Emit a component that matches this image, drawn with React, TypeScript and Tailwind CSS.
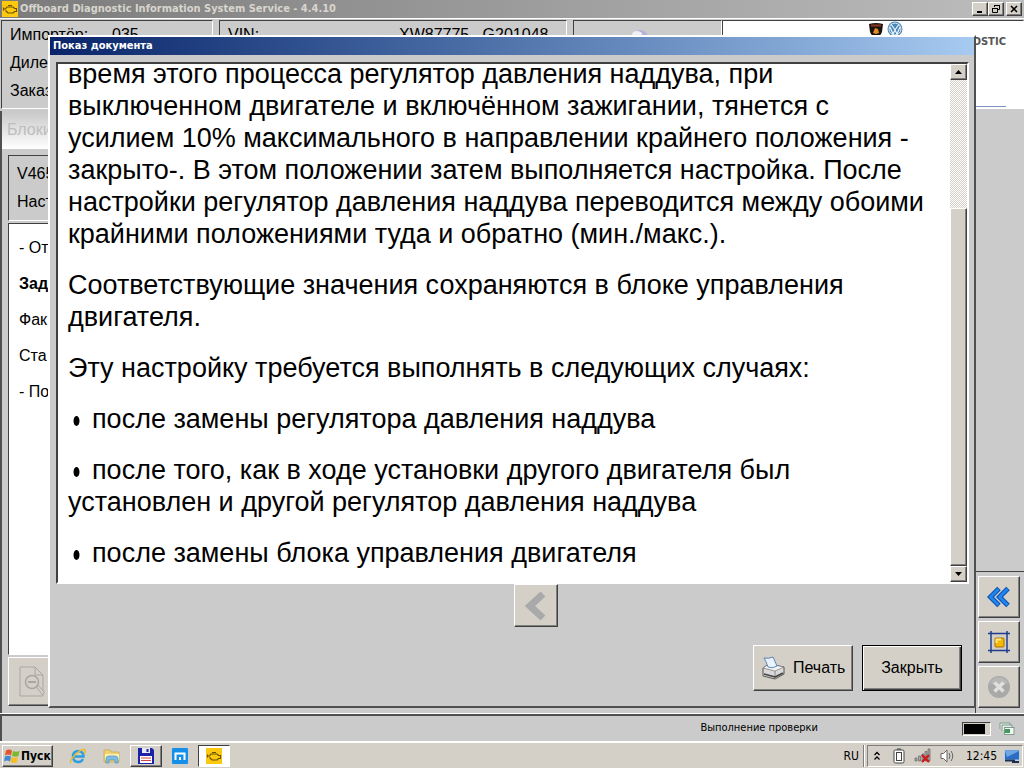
import type { ReactNode } from "react";
import { clsx } from "clsx";

const raised =
  "border border-t-white border-l-white border-r-[#404040] border-b-[#404040] shadow-[inset_-1px_-1px_0_#808080]";
const sunken =
  "border border-t-[#404040] border-l-[#404040] border-r-white border-b-white";
const uiFont = "font-['DejaVu_Sans_Condensed','DejaVu_Sans',sans-serif]";

function EngineIcon({ className }: { className?: string }) {
  return (
    <svg viewBox="0 0 16 16" className={className} aria-hidden="true">
      <rect width="16" height="16" fill="#fcc810" />
      <path
        d="M1.500 6.500v3M2 8h1.500L5 6h6l1.500 1.500h2v3h-2L11 12H6L3.500 9.500M6 4.500h4"
        fill="none"
        stroke="#6b5200"
        strokeWidth="1.200"
      />
    </svg>
  );
}

function ChromeButton({ label, children }: { label: string; children: ReactNode }) {
  return (
    <button
      aria-label={label}
      className={clsx("flex h-[14px] w-4 items-center justify-center bg-[#d4d0c8]", raised)}
    >
      <svg viewBox="0 0 12 10" className="h-[10px] w-3" fill="none" stroke="#000">
        {children}
      </svg>
    </button>
  );
}

function TitleBar() {
  return (
    <header className="flex h-[18px] shrink-0 items-center bg-linear-to-r from-[#7b7b7b] to-[#bdbdbd] pr-[2px] pl-[2px]">
      <EngineIcon className="size-4" />
      <h1 className={clsx("ml-[2px] flex-1 text-[11px] leading-4 font-bold text-[#d8d5ce]", uiFont)}>
        Offboard Diagnostic Information System Service - 4.4.10
      </h1>
      <div className="flex">
        <ChromeButton label="Свернуть">
          <path d="M3 8h5" strokeWidth="2" />
        </ChromeButton>
        <ChromeButton label="Восстановить">
          <path d="M4.500 3V1.500h5v4H8M4 1.500h6M2.500 4.500h5v4h-5zM2 4.500h6" />
        </ChromeButton>
        <span className="w-[2px]" />
        <ChromeButton label="Закрыть окно">
          <path d="M3 2l6 6M9 2l-6 6" strokeWidth="1.600" />
        </ChromeButton>
      </div>
    </header>
  );
}

function BrandPanel() {
  return (
    <div className={clsx("flex w-[302px] flex-col bg-white pr-[17px] pb-px", sunken)}>
      <div className="ml-[145px] flex h-[14px] gap-[3px]">
        <svg viewBox="0 0 16 16" className="mt-[2px] size-4" aria-hidden="true">
          <path d="M1 1q7-2 14 0l-1 8q-2 5-6 6-4-1-6-6z" fill="#1c1210" />
          <path d="M3 2.500h10" stroke="#8a3a22" strokeWidth="2" />
          <path d="M5 10l2-5 3 1 1 4-3 1z" fill="#e08a28" />
        </svg>
        <svg viewBox="0 0 16 16" className="size-4" aria-hidden="true">
          <circle cx="8" cy="8" r="7.500" fill="#4b86b8" />
          <circle cx="8" cy="8" r="6" fill="none" stroke="#dcebf5" />
          <path d="M4 3l4 6 4-6M3 6l3 7 2-4 2 4 3-7" fill="none" stroke="#eef6fb" strokeWidth="1.200" />
        </svg>
      </div>
      <p className="self-end text-[10px] leading-[14px] font-bold text-[#555] font-['DejaVu_Sans',sans-serif]">
        DIAGNOSTIC
      </p>
      <div className="mt-auto h-px bg-[#7b93bd]" />
    </div>
  );
}

function InfoHeader() {
  return (
    <section className="flex h-[91px] shrink-0 border-t border-white pt-px pl-px text-base leading-7">
      <div className={clsx("w-[212px] pl-2", sunken)}>
        <dl className="grid grid-cols-[102px_1fr]">
          <dt>Импортёр:</dt>
          <dd>035</dd>
          <dt>Дилер</dt>
          <dd />
          <dt>Заказ</dt>
          <dd />
        </dl>
      </div>
      <div className={clsx("ml-[6px] flex-1 pl-2", sunken)}>
        <dl className="grid grid-cols-[171px_1fr]">
          <dt>VIN:</dt>
          <dd>XW87775_ G201048</dd>
        </dl>
      </div>
      <div className={clsx("ml-[6px] flex w-[149px] items-start justify-center pt-2", sunken)}>
        <svg viewBox="0 0 18 18" className="mr-4 size-[18px]" aria-hidden="true">
          <ellipse cx="9" cy="9" rx="8" ry="8" fill="#b7b0d8" />
          <ellipse cx="6" cy="5" rx="5" ry="3" fill="#f1eff5" />
        </svg>
      </div>
      <BrandPanel />
    </section>
  );
}

const steps = [
  { text: "- От", bold: false },
  { text: "Зад", bold: true },
  { text: "Фак", bold: false },
  { text: "Ста", bold: false },
  { text: "- По", bold: false },
];

function TestPlan() {
  return (
    <main className="flex flex-1 flex-col border-l-2 border-[#505050] pb-[7px]">
      <h2 className="h-[38px] shrink-0 bg-linear-to-b from-[#c8c8c8] to-white pl-[5px] text-base leading-[38px] text-[#bdbdbd]">
        Блоки
      </h2>
      <div className="mt-[6px] ml-[6px] flex flex-1 flex-col">
        <div className={clsx("h-[66px] shrink-0 pt-1 pl-2 text-base leading-7", sunken)}>
          <p>V465</p>
          <p>Наст</p>
        </div>
        <ul className={clsx("mt-[2px] flex-1 bg-white pt-[6px] pl-[10px]", sunken)}>
          {steps.map((step) => (
            <li
              key={step.text}
              className={clsx("text-base leading-9", step.bold && "font-bold")}
            >
              {step.text}
            </li>
          ))}
        </ul>
        <button
          aria-label="Просмотр документа"
          className={clsx("mt-[2px] h-[49px] w-[54px] shrink-0 bg-[#d4d0c8] pl-[10px]", raised)}
        >
          <svg viewBox="0 0 28 32" className="h-8 w-7" fill="none" stroke="#a9a7a2" aria-hidden="true">
            <path d="M1 1h15l8 8v21H1zM16 1v8h8" />
            <circle cx="13" cy="16" r="6.500" fill="#d4d0c8" strokeWidth="1.500" />
            <path d="M9 16h8" strokeWidth="2" />
            <path d="M17.500 21l2-1.500 6 7-2 2.500z" fill="#d4d0c8" />
          </svg>
        </button>
      </div>
    </main>
  );
}

function ToolButton({ label, children }: { label: string; children: ReactNode }) {
  return (
    <button
      aria-label={label}
      className={clsx("flex h-[42px] w-[42px] items-center justify-center bg-[#d4d0c8]", raised)}
    >
      {children}
    </button>
  );
}

function SideTools() {
  return (
    <aside className="flex w-[49px] shrink-0 flex-col justify-end">
      <div className="flex flex-col gap-[3px] border-t border-l border-t-[#404040] border-l-[#404040] pt-1 pb-[5px] pl-[2px]">
        <ToolButton label="Назад">
          <svg viewBox="0 0 24 24" className="size-6" fill="none" strokeLinejoin="miter" aria-hidden="true">
            <path d="M12 3.500L3.500 12l8.500 8.500M21 3.500L12.500 12l8.500 8.500" stroke="#0b4fae" strokeWidth="5" />
            <path d="M11.500 4L3.500 12l8 8M20.500 4l-8 8 8 8" stroke="#1e86ee" strokeWidth="3" />
          </svg>
        </ToolButton>
        <ToolButton label="Увеличить">
          <svg viewBox="0 0 24 24" className="size-6" aria-hidden="true">
            <path d="M4 1v22M20 1v22M1 3.500h22M1 20.500h22" stroke="#1f3f8c" strokeWidth="1.500" />
            <rect x="8" y="8" width="9" height="9" rx="1" fill="#f3b800" stroke="#a86f00" />
            <path d="M9 9.500h5M9.500 9v4" stroke="#ffe98a" strokeWidth="2" />
          </svg>
        </ToolButton>
        <ToolButton label="Отмена">
          <svg viewBox="0 0 24 24" className="size-6" aria-hidden="true">
            <circle cx="12" cy="12" r="11" fill="#a9a9a9" />
            <path d="M3 8a10 10 0 0 1 18 0q-9 5-18 0" fill="#b8b8b8" />
            <path d="M7.500 7.500l9 9M16.500 7.500l-9 9" stroke="#e2e0dc" strokeWidth="3.500" />
          </svg>
        </ToolButton>
      </div>
    </aside>
  );
}

function ScrollBar() {
  return (
    <div className="flex w-[17px] shrink-0 flex-col bg-[repeating-conic-gradient(#d4d0c8_0_25%,#ffffff_0_50%)] bg-size-[2px_2px]">
      <button
        aria-label="Вверх"
        className={clsx("flex h-4 items-center justify-center bg-[#d4d0c8]", raised)}
      >
        <svg viewBox="0 0 7 4" className="h-1 w-[7px]">
          <path d="M0 4l3.500-4L7 4z" />
        </svg>
      </button>
      <div className="flex-[129]" />
      <div className={clsx("flex-[358] bg-[#d4d0c8]", raised)} />
      <button
        aria-label="Вниз"
        className={clsx("flex h-4 items-center justify-center bg-[#d4d0c8]", raised)}
      >
        <svg viewBox="0 0 7 4" className="h-1 w-[7px]">
          <path d="M0 0h7L3.500 4z" />
        </svg>
      </button>
    </div>
  );
}

function Bullet() {
  return (
    <svg viewBox="0 0 6 10" className="mr-3 ml-[5px] inline h-[10px] w-[7px]" aria-hidden="true">
      <ellipse cx="3" cy="5" rx="3" ry="5" />
    </svg>
  );
}

function DocumentDialog() {
  return (
    <div
      role="dialog"
      aria-labelledby="doc-title"
      className="absolute top-[35px] right-12 bottom-[60px] left-12 flex flex-col border-t-2 border-r-2 border-b-2 border-l-2 border-t-white border-r-[#505050] border-b-[#505050] border-l-white bg-[#cbcbcb]"
    >
      <h2
        id="doc-title"
        className={clsx(
          "h-[18px] shrink-0 bg-linear-to-r from-[#0a246a] to-[#a6caf0] pl-[3px] text-[11px] leading-[18px] font-bold text-white",
          uiFont,
        )}
      >
        Показ документа
      </h2>
      <div className={clsx("mt-[7px] mr-[5px] ml-[6px] flex min-h-0 flex-1 border-2 bg-white", sunken)}>
        <article className="flex min-h-0 flex-1 flex-col justify-end gap-[19px] overflow-hidden pb-[13px] pl-[10px] text-[27px] leading-8 whitespace-nowrap">
          <p>
            время этого процесса регулятор давления наддува, при
            <br />
            выключенном двигателе и включённом зажигании, тянется с
            <br />
            усилием 10% максимального в направлении крайнего положения -
            <br />
            закрыто-. В этом положении затем выполняется настройка. После
            <br />
            настройки регулятор давления наддува переводится между обоими
            <br />
            крайними положениями туда и обратно (мин./макс.).
          </p>
          <p>
            Соответствующие значения сохраняются в блоке управления
            <br />
            двигателя.
          </p>
          <p>Эту настройку требуется выполнять в следующих случаях:</p>
          <p>
            <Bullet />
            после замены регулятора давления наддува
          </p>
          <p>
            <Bullet />
            после того, как в ходе установки другого двигателя был
            <br />
            установлен и другой регулятор давления наддува
          </p>
          <p>
            <Bullet />
            после замены блока управления двигателя
          </p>
        </article>
        <ScrollBar />
      </div>
      <button
        aria-label="Предыдущая страница"
        className={clsx(
          "ml-12 flex h-[43px] w-11 shrink-0 items-center justify-center self-center bg-[#d4d0c8]",
          raised,
        )}
      >
        <svg viewBox="0 0 22 30" className="h-[30px] w-[22px]" aria-hidden="true">
          <path d="M18 3L5 15l13 12" fill="none" stroke="#a9a9a9" strokeWidth="7" />
        </svg>
      </button>
      <div className="mt-[18px] flex shrink-0 justify-end gap-[9px] pr-3 pb-[15px] text-base">
        <button
          className={clsx("flex h-[46px] w-[100px] items-center gap-[7px] bg-[#d4d0c8] pl-2", raised)}
        >
          <svg viewBox="0 0 24 24" className="size-6" aria-hidden="true" strokeLinejoin="round">
            <path d="M1 12l6-4 15 3v7l-9 5-12-3z" fill="#d9d9d9" stroke="#555" />
            <path d="M1 12l12 3 9-4-15-3z" fill="#f4f4f4" stroke="#777" strokeWidth=".7" />
            <path d="M2 2q5 1 9-1l4 9q-4 3-9 1-2-6-4-9z" fill="#e8f3ff" stroke="#3f6fa8" strokeWidth=".8" />
            <path d="M13 15v8" stroke="#888" />
            <path d="M2 18l11 3 8-4" fill="none" stroke="#444" strokeWidth="1.500" />
          </svg>
          Печать
        </button>
        <button
          className="h-[46px] w-[100px] border border-black bg-[#d4d0c8] shadow-[inset_1px_1px_0_#fff,inset_-1px_-1px_0_#404040,inset_-2px_-2px_0_#808080]"
        >
          Закрыть
        </button>
      </div>
    </div>
  );
}

function StatusBar() {
  return (
    <footer className="shrink-0 border-t border-white">
      <div className="flex h-[27px] items-center justify-end border-t-2 border-l-2 border-[#505050] pr-[9px]">
        <p className={clsx("mr-[144px] text-[11px]", uiFont)}>Выполнение проверки</p>
        <div className={clsx("mr-2 h-[14px] w-[29px] bg-[#d4d0c8] p-px pr-[5px]", sunken)}>
          <div className="h-full bg-black" />
        </div>
        <svg viewBox="0 0 16 14" className="h-[14px] w-4" fill="none" aria-hidden="true">
          <path d="M1 7V1h10v2M3 9V3h10v2" fill="#e8eee8" stroke="#7d9a8a" />
          <rect x="5.500" y="5.500" width="9.500" height="7" fill="#f4f8f4" stroke="#7d9a8a" />
          <rect x="6" y="7" width="5" height="4" fill="#3f9a5a" />
        </svg>
      </div>
    </footer>
  );
}

function TaskBar() {
  return (
    <nav className={clsx("flex h-[27px] shrink-0 items-center border-t-2 border-white bg-[#d4d0c8]", uiFont)}>
      <button
        className={clsx("ml-[2px] flex h-[22px] w-[51px] items-center gap-px pl-px text-xs font-bold", raised)}
      >
        <svg viewBox="0 0 16 16" className="size-4 shrink-0" aria-hidden="true">
          <path d="M2 2.500q3-2 6 0L7 7.500Q4 5.500 1 7.500z" fill="#e5552a" />
          <path d="M9 3q3 1.500 6.500 0L14.500 8q-3 1.500-6.500-.2z" fill="#7cb82f" />
          <path d="M1 8.500q3-1.500 6 0l-1 5q-3-2-6 0z" fill="#3c8ad8" />
          <path d="M7.500 9q3 1.500 6.500.2l-1 5q-3 1.500-6.500-.2z" fill="#f7bd27" />
        </svg>
        Пуск
      </button>
      <button aria-label="Internet Explorer" className="ml-4 size-[18px]">
        <svg viewBox="0 0 18 18" className="size-[18px]" fill="none">
          <path d="M4.500 9.500h10q0-5-5-5.500-5.500 0-5.500 5.500 0 5.500 5.500 5.500 3 0 4.500-3" stroke="#2c9fdf" strokeWidth="2.500" />
          <path d="M2 16q-2-2 4-8 7-7 10-5 1 1-1 4" stroke="#edb92e" strokeWidth="1.500" />
        </svg>
      </button>
      <button aria-label="Проводник" className="ml-4 size-[18px]">
        <svg viewBox="0 0 18 18" className="size-[18px]">
          <path d="M1 3h6l1 2h8v10H1z" fill="#f0d272" stroke="#c9a840" strokeWidth=".7" />
          <path d="M2 7h14v6H2z" fill="#fbeeb4" />
          <path d="M3 16v-4q0-3 3-3h6q3 0 3 3v4h-3v-3H6v3z" fill="#7fbde0" stroke="#4d96c4" strokeWidth=".7" />
        </svg>
      </button>
      <button
        aria-label="Total Commander"
        className={clsx("ml-[9px] flex h-[22px] w-8 items-center justify-center", raised)}
      >
        <svg viewBox="0 0 16 16" className="size-4">
          <path d="M0 0h14l2 2v14H0z" fill="#1a22a8" />
          <rect x="4" y="0" width="8" height="5" fill="#e7e9f5" />
          <rect x="8.500" y="1" width="2" height="3" fill="#1a22a8" />
          <rect x="2" y="8" width="12" height="7" fill="#fff" />
          <path d="M3 10h10M3 12.500h10" stroke="#d3414a" />
        </svg>
      </button>
      <button aria-label="Maxthon" className="ml-[10px] size-4">
        <svg viewBox="0 0 16 16" className="size-4">
          <rect width="16" height="16" rx="1" fill="#1590ea" />
          <path d="M3.500 12V5.500h9V12M8 9v3" fill="none" stroke="#fff" strokeWidth="2" />
        </svg>
      </button>
      <button
        aria-label="ODIS Service"
        className={clsx("ml-[10px] flex h-[22px] w-8 items-center justify-center bg-white", sunken)}
      >
        <EngineIcon className="size-4" />
      </button>
      <span className="ml-auto text-xs">RU</span>
      <span className="mr-[2px] ml-[4px] h-[22px] w-[2px] border-l border-l-[#808080] bg-white" />
      <div className="mr-px flex h-[22px] items-center border border-t-[#808080] border-r-white border-b-white border-l-[#808080] pr-[2px] pl-[5px] text-xs">
        <svg viewBox="0 0 8 10" className="h-[10px] w-2" fill="none" stroke="#000" strokeWidth="1.300" aria-hidden="true">
          <path d="M1.500 4L4 1.500 6.500 4M1.500 8.500L4 6l2.500 2.500" />
        </svg>
        <svg viewBox="0 0 12 16" className="ml-3 h-4 w-3" fill="#fff" stroke="#444" aria-hidden="true">
          <rect x="1" y="2" width="10" height="13" rx="1.500" />
          <rect x="3.500" y="4.500" width="5" height="8" />
          <path d="M4 1h4" />
        </svg>
        <svg viewBox="0 0 17 15" className="ml-[9px] h-[15px] w-[17px]" aria-hidden="true">
          <path d="M1 10h2v3H1zM4.500 8h2v5h-2zM8 6h2v7H8zM11 3.500h2V13h-2zM14 1h2v12h-2z" fill="#aaa" stroke="#666" strokeWidth=".7" />
          <path d="M8 7l7 7M15 7l-7 7" stroke="#d01818" strokeWidth="2.300" />
        </svg>
        <svg viewBox="0 0 14 14" className="ml-[9px] size-[14px]" fill="none" stroke="#666" aria-hidden="true">
          <path d="M1 4.500h2.500L7 1v12L3.500 9.500H1z" fill="#fff" />
          <path d="M9 4q2 3 0 6M11 2q3.500 5 0 10" />
        </svg>
        <span className="ml-3">12:45</span>
        <svg viewBox="0 0 16 14" className="ml-[7px] h-[14px] w-4" aria-hidden="true">
          <rect x=".5" y="1" width="15" height="10" fill="#2b6cc4" stroke="#b8cfe6" />
          <path d="M1 2h14L3 8z" fill="#6fa7e2" />
          <path d="M1 11.500h10M8 13h7" stroke="#1b2f55" strokeWidth="2" />
        </svg>
      </div>
    </nav>
  );
}

export default function App() {
  return (
    <div className="relative flex h-screen min-h-[480px] flex-col overflow-hidden bg-[#cbcbcb] text-black font-['Liberation_Sans',Arial,sans-serif]">
      <TitleBar />
      <InfoHeader />
      <div className="mt-[2px] flex min-h-0 flex-1">
        <TestPlan />
        <SideTools />
      </div>
      <StatusBar />
      <TaskBar />
      <DocumentDialog />
    </div>
  );
}
